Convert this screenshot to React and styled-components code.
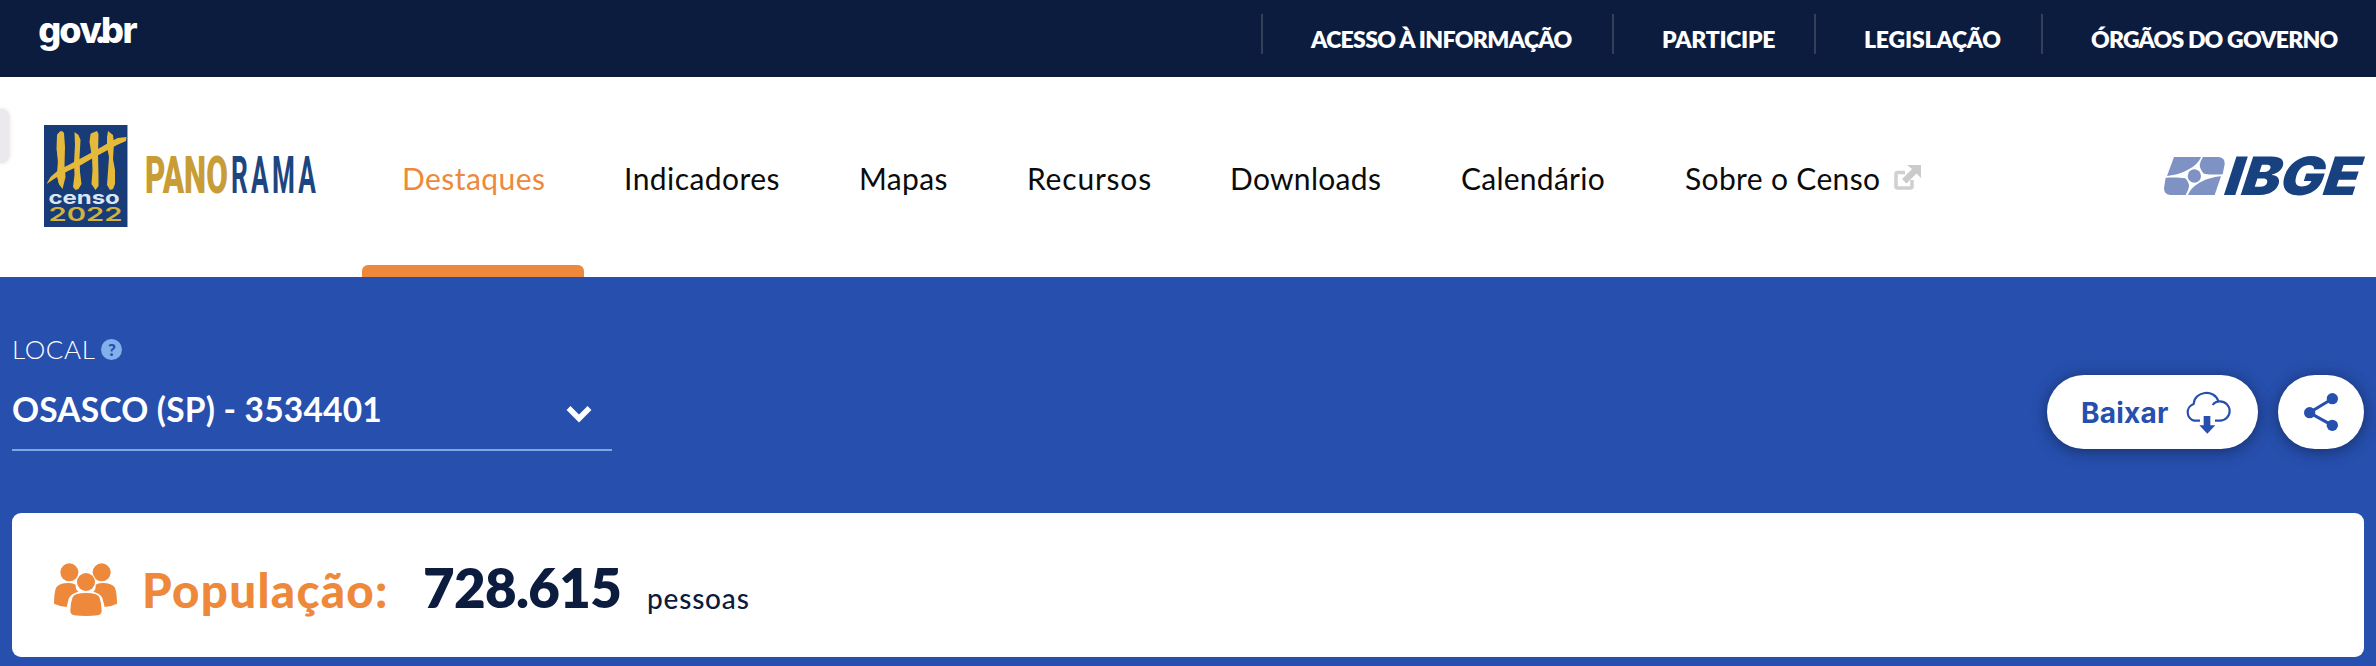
import React from 'react';
import styled, { createGlobalStyle } from 'styled-components';

const Global = createGlobalStyle`
  * { box-sizing: border-box; }
  body { margin: 0; background: #264fae; font-family: Lato, "Open Sans", sans-serif; }
  svg { display: block; flex: none; overflow: visible; }
`;

const Page = styled.div`
  width: 100%;
  min-height: 666px;
  display: flex;
  flex-direction: column;
  overflow: hidden;
`;

const GovBar = styled.header`
  height: 77px;
  background: #0c1c3e;
  display: flex;
  justify-content: space-between;
  padding: 14px 0 0 38px;
`;

const GovLinks = styled.nav`
  display: flex;
  height: 40px;
`;

const GovLink = styled.a`
  width: ${(p) => p.$width}px;
  padding-left: 48px;
  border-left: 2px solid #33405c;
  color: #fff;
  font-size: 23px;
  font-weight: 800;
  line-height: 51px;
  white-space: nowrap;
  letter-spacing: ${(p) => p.$spacing}px;
`;

const Header = styled.div`
  height: 200px;
  background: #fff;
  display: flex;
  align-items: flex-start;
`;

const SideHandle = styled.div`
  width: 9px;
  height: 54px;
  margin-top: 32px;
  background: #ebe9ee;
  border-radius: 0 8px 8px 0;
  box-shadow: 0 0 4px rgba(0, 0, 0, 0.16);
`;

const Brand = styled.a`
  width: 353px;
  padding: 48px 0 0 35px;
`;

const Menu = styled.nav`
  display: flex;
  flex: 1;
`;

const MenuItem = styled.a`
  position: relative;
  width: ${(p) => p.$width}px;
  height: 200px;
  padding: 83px 0 0 40px;
  display: flex;
  font-size: 30px;
  line-height: 36px;
  white-space: nowrap;
  color: ${(p) => (p.$active ? '#ee893b' : '#0b0b0b')};
  letter-spacing: ${(p) => p.$spacing}px;

  &::after {
    content: '';
    display: ${(p) => (p.$active ? 'block' : 'none')};
    position: absolute;
    left: 0;
    right: 0;
    bottom: 0;
    height: 12px;
    border-radius: 6px 6px 0 0;
    background: #ee893b;
  }
`;

const ExternalMark = styled.svg`
  margin: 4px 0 0 14px;
`;

const Sponsor = styled.a`
  padding: 79px 9px 0 0;
`;

const Main = styled.main`
  flex: 1;
  padding: 0 12px 9px;
  background: #264fae;
`;

const Toolbar = styled.section`
  height: 236px;
  display: flex;
  justify-content: space-between;
`;

const Place = styled.div`
  width: 600px;
  padding-top: 56px;
`;

const PlaceLabel = styled.div`
  display: flex;
  align-items: center;
  height: 32px;
  color: #fff;
  font-size: 26px;
  font-weight: 300;
  letter-spacing: 0.6px;
`;

const HelpMark = styled.span`
  width: 21px;
  height: 21px;
  margin-left: 6px;
  border-radius: 50%;
  background: #82b0ea;
  color: #264fae;
  font: 900 17px/21px Lato, sans-serif;
  letter-spacing: 0;
  text-align: center;
`;

const PlaceSelect = styled.div`
  height: 86px;
  border-bottom: 2px solid #7ba8e4;
  display: flex;
  justify-content: space-between;
  padding: 24px 20px 0 0;
  color: #fff;
  font-size: 33.5px;
  line-height: 40px;
  font-weight: 700;
  letter-spacing: 0.2px;
`;

const Chevron = styled.svg`
  margin-top: 16px;
`;

const Actions = styled.div`
  display: flex;
  gap: 20px;
  padding-top: 98px;
`;

const Pill = styled.button`
  height: 74px;
  width: ${(p) => p.$width}px;
  display: flex;
  align-items: center;
  padding: 1px 0 0 ${(p) => p.$inset}px;
  border: 0;
  border-radius: 37px;
  background: #fff;
  color: #264fae;
  box-shadow: 0 2px 16px rgba(0, 0, 0, 0.42);
  font: 700 28px/34px Inter, sans-serif;
  letter-spacing: 0.24px;
`;

const CloudMark = styled.svg`
  margin-left: 15px;
`;

const Card = styled.section`
  height: 144px;
  border-radius: 9px;
  background: #fff;
  display: flex;
  align-items: flex-start;
  padding-left: 42px;
`;

const PeopleMark = styled.svg`
  margin-top: 50px;
`;

const CardTitle = styled.h2`
  margin: 48px 0 0 24px;
  width: 281px;
  color: #ee893b;
  font-size: 47.5px;
  line-height: 57px;
  font-weight: 900;
  letter-spacing: 1.3px;
  white-space: nowrap;
`;

const Figure = styled.strong`
  margin-top: 41px;
  width: 224px;
  color: #0c1c3e;
  font-size: 54.5px;
  line-height: 66px;
  font-weight: 800;
  letter-spacing: -0.65px;
`;

const Unit = styled.span`
  margin-top: 68px;
  color: #0c1c3e;
  font-size: 28px;
  line-height: 34px;
  font-weight: 500;
  letter-spacing: 0.8px;
`;

const GovLogo = () => (
  <svg width="102" height="42" viewBox="38 14 102 42" fill="#fff" fontFamily="Inter, sans-serif" fontSize="36" fontWeight="800">
    <text y="42.5" x="38.3 59.3 79.5 94.3 101 122.5">gov.br</text>
  </svg>
);

const CensoLogo = () => (
  <svg width="274" height="104" viewBox="44 125 274 104">
    <path fill="#173c78" d="M44 125h83v102H44z" />
    <path fill="#8fa3c4" d="M127 125h1v102h-1z" />
    <g fill="#e5b93a">
      <path d="M60 132l2-1 2 2 1 14-.5 18 1 12-2 8-1 4-4-6-1-12 .5-12-1.500-10 .5-14z" />
      <path d="M57.500 134l3-3 3 2 .5 16-1 16 .5 14-1 9-3-3-2.500-8 1-14-1-14z" />
      <path d="M74.500 132l4 3 2 5-1 18 .5 14 1.500 12-3 5-3 1-2.500-3 1.500-12-.5-12 1-18z" />
      <path d="M92 133l5-2 1.500 3-.5 20 .5 22 0 10-3 4-4-6 1-14-.5-12-1.500-10-1-6 1-8z" />
      <path d="M108 131l5 4 1 8-1 16 2 11 0 14-2 5-3 1-3-5 1-14 1-14-2-10 0-10z" />
      <path d="M46.500 184l4-7 8-7 10-5 13-7 13-7 12-7 11-6 9-1-.5 4-9 4-11 6-13 7-12 7-13 6-11 6-6 4z" />
    </g>
    <text transform="translate(48.500 203.500) scale(1.33 1)" fontFamily="Inter, sans-serif" fontWeight="700" fontSize="18" fill="#dbe5f3">censo</text>
    <text transform="translate(48.500 221) scale(1.54 1)" fontFamily="Inter, sans-serif" fontWeight="600" fontSize="19" fill="#d2b23c">2022</text>
    <text transform="translate(145 193) scale(.61 1)" fontFamily="Roboto, sans-serif" fontWeight="900" fontSize="51.500" fill="#c89d35">PANO</text>
    <text transform="translate(231 193) scale(.508 1)" fontFamily="Roboto, sans-serif" fontWeight="700" fontSize="51.500" fill="#1d4580" letterSpacing="6.500">RAMA</text>
  </svg>
);

const IbgeLogo = () => (
  <svg width="204" height="42" viewBox="129 77 612 126">
    <g fill="#7e93c3">
      <path d="M162 80H243C232 108 190 132 141 137z" />
      <path d="M249 80H296Q316 82 314 102L308 132C284 134 264 132 252 130Q240 118 239 104Q242 90 249 80z" />
      <path d="M137 142C165 140 182 142 196 144Q208 156 207 170Q203 184 197 194H150Q132 192 132 174z" />
      <path d="M303 138L284 194H204C214 166 254 142 303 138z" />
      <circle cx="223" cy="137" r="20" />
    </g>
    <text transform="translate(304 194) skewX(-18) scale(1.085 1)" fontFamily="Inter, sans-serif" fontWeight="900" fontSize="159" fill="#184180">IBGE</text>
  </svg>
);

export default function App() {
  return (
    <Page>
      <Global />
      <GovBar>
        <GovLogo />
        <GovLinks>
          <GovLink $width={351} $spacing={-0.65}>ACESSO À INFORMAÇÃO</GovLink>
          <GovLink $width={202} $spacing={-0.3}>PARTICIPE</GovLink>
          <GovLink $width={227} $spacing={-0.2}>LEGISLAÇÃO</GovLink>
          <GovLink $width={335} $spacing={-0.8}>ÓRGÃOS DO GOVERNO</GovLink>
        </GovLinks>
      </GovBar>
      <Header>
        <SideHandle />
        <Brand><CensoLogo /></Brand>
        <Menu>
          <MenuItem $active $width={222} $spacing={0.45}>Destaques</MenuItem>
          <MenuItem $width={235} $spacing={0.45}>Indicadores</MenuItem>
          <MenuItem $width={168} $spacing={0.35}>Mapas</MenuItem>
          <MenuItem $width={203} $spacing={0.8}>Recursos</MenuItem>
          <MenuItem $width={231} $spacing={0.3}>Downloads</MenuItem>
          <MenuItem $width={224} $spacing={0.25}>Calendário</MenuItem>
          <MenuItem $width={280} $spacing={0.35}>
            Sobre o Censo
            <ExternalMark width="27" height="27" viewBox="0 0 27 27">
              <path d="M11 8.500H3.500Q2 8.500 2 10V22.500Q2 24 3.500 24H16.500Q18 24 18 22.500V16" fill="none" stroke="#d0d0d0" strokeWidth="3.500" />
              <path d="M13 1H27V14L22.500 9.500L12.500 19.500L8 15L18 5z" fill="#cbcbcb" />
            </ExternalMark>
          </MenuItem>
        </Menu>
        <Sponsor><IbgeLogo /></Sponsor>
      </Header>
      <Main>
        <Toolbar>
          <Place>
            <PlaceLabel>LOCAL<HelpMark>?</HelpMark></PlaceLabel>
            <PlaceSelect>
              OSASCO (SP) - 3534401
              <Chevron width="26" height="18" viewBox="0 0 26 18">
                <path d="M2.500 3L13 13.500L23.500 3" fill="none" stroke="#fff" strokeWidth="5.500" />
              </Chevron>
            </PlaceSelect>
          </Place>
          <Actions>
            <Pill $width={211} $inset={34}>
              Baixar
              <CloudMark width="47" height="42" viewBox="495 131 141 126">
                <g fill="none" stroke="#264fae" strokeWidth="6.500">
                  <path d="M543 217H526A26 26 0 0 1 524 167C526 128 586 121 598 158" />
                  <path d="M581 170C587 161 596 159 603 159A29 29 0 0 1 603 217H588" />
                </g>
                <path fill="#264fae" d="M554 203h20v28h15l-24 25-24-25h13z" />
              </CloudMark>
            </Pill>
            <Pill $width={86} $inset={26}>
              <svg width="35" height="39" viewBox="852 128 105 117">
                <path d="M937 145L868 187L937 225" fill="none" stroke="#264fae" strokeWidth="9" />
                <g fill="#264fae"><circle cx="937" cy="145" r="17" /><circle cx="869" cy="187" r="17" /><circle cx="937" cy="225" r="17" /></g>
              </svg>
            </Pill>
          </Actions>
        </Toolbar>
        <Card>
          <PeopleMark width="64" height="54" viewBox="54 38 192 162" fill="#ee893b">
            <circle cx="100" cy="66" r="27" />
            <circle cx="197" cy="66" r="27" />
            <path d="M54 160Q54 130 60 112Q68 98 98 98Q112 98 119 103Q118 118 127 124Q104 130 98 146L92 170Q70 168 54 160z" />
            <path d="M243 160Q243 130 237 112Q229 98 199 98Q185 98 179 103Q180 118 172 124Q195 130 200 146L206 170Q228 168 243 160z" />
            <circle cx="150" cy="95" r="30" fill="#fff" />
            <circle cx="150" cy="95" r="27" />
            <path d="M150 128Q184 128 190 140Q196 156 197 180Q198 192 186 195Q150 199 114 195Q102 192 103 180Q104 156 110 140Q116 128 150 128z" />
          </PeopleMark>
          <CardTitle>População:</CardTitle>
          <Figure>728.615</Figure>
          <Unit>pessoas</Unit>
        </Card>
      </Main>
    </Page>
  );
}
